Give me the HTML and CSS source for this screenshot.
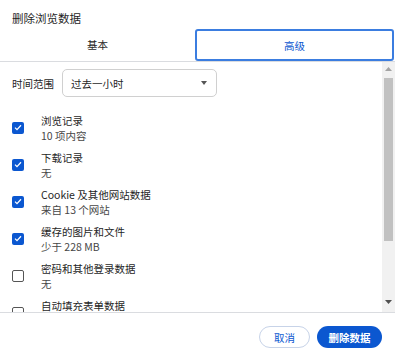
FILE: index.html
```
<!DOCTYPE html>
<html lang="zh-CN">
<head>
  <meta charset="UTF-8">
  <title>删除浏览数据</title>
  <link rel="stylesheet" href="styles.css">
</head>
<body>
  <div class="dialog">
    <div class="title">删除浏览数据</div>
    <div class="tabs">
      <div class="tab">基本</div>
      <div class="tab active">高级</div>
    </div>
    <div class="content">
      <div class="list">
        <div class="range-row">
          <span class="range-label">时间范围</span>
          <div class="select">
            <span>过去一小时</span>
            <svg class="caret" width="6" height="4" viewBox="0 0 6 4"><path d="M0 0h6L3 4z" fill="#555"/></svg>
          </div>
        </div>
        <div class="item">
          <span class="box checked"><svg width="8" height="7" viewBox="0 0 8 7"><path d="M1 3.6l2 2L7 1.3" fill="none" stroke="#fff" stroke-width="1.3"/></svg></span>
          <div class="text"><div class="name">浏览记录</div><div class="sub">10 项内容</div></div>
        </div>
        <div class="item">
          <span class="box checked"><svg width="8" height="7" viewBox="0 0 8 7"><path d="M1 3.6l2 2L7 1.3" fill="none" stroke="#fff" stroke-width="1.3"/></svg></span>
          <div class="text"><div class="name">下载记录</div><div class="sub">无</div></div>
        </div>
        <div class="item">
          <span class="box checked"><svg width="8" height="7" viewBox="0 0 8 7"><path d="M1 3.6l2 2L7 1.3" fill="none" stroke="#fff" stroke-width="1.3"/></svg></span>
          <div class="text"><div class="name">Cookie 及其他网站数据</div><div class="sub">来自 13 个网站</div></div>
        </div>
        <div class="item">
          <span class="box checked"><svg width="8" height="7" viewBox="0 0 8 7"><path d="M1 3.6l2 2L7 1.3" fill="none" stroke="#fff" stroke-width="1.3"/></svg></span>
          <div class="text"><div class="name">缓存的图片和文件</div><div class="sub">少于 228 MB</div></div>
        </div>
        <div class="item">
          <span class="box"></span>
          <div class="text"><div class="name">密码和其他登录数据</div><div class="sub">无</div></div>
        </div>
        <div class="item">
          <span class="box"></span>
          <div class="text"><div class="name">自动填充表单数据</div><div class="sub">无</div></div>
        </div>
      </div>
      <div class="scrollbar">
        <svg class="arrow" width="7" height="4" viewBox="0 0 7 4"><path d="M0 4h7L3.5 0z" fill="#a3a3a3"/></svg>
        <div class="thumb"></div>
        <svg class="arrow down" width="7" height="4" viewBox="0 0 7 4"><path d="M0 0h7L3.5 4z" fill="#505050"/></svg>
      </div>
    </div>
    <div class="footer">
      <button class="btn cancel">取消</button>
      <button class="btn primary">删除数据</button>
    </div>
  </div>
</body>
</html>
```

FILE: styles.css
```
body {
  margin: 0;
  background-color: #ffffff;
  color: #1f1f1f;
  font-family: "Noto Sans CJK SC", "Noto Sans", sans-serif;
  font-size: 10.5px;
}
.dialog {
  width: 395px;
  height: 362px;
  display: flex;
  flex-direction: column;
}
.title {
  height: 29px;
  padding-left: 12px;
  font-size: 11.5px;
  line-height: 36px;
}
.tabs {
  display: flex;
  height: 33px;
  border-bottom: 1px solid #dadce0;
  box-sizing: border-box;
}
.tab {
  flex: 1;
  display: flex;
  align-items: center;
  justify-content: center;
  margin-bottom: 1px;
}
.tab.active {
  color: #0b57d0;
  border: 2px solid #3b7de0;
  border-radius: 3px;
  margin: 0 1px 0 0;
  height: 32px;
  box-sizing: border-box;
}
.content {
  height: 250px;
  display: flex;
  overflow: hidden;
}
.list {
  flex: 1;
  padding: 7px 0 0 12px;
  overflow: hidden;
}
.range-row {
  display: flex;
  align-items: center;
  height: 28px;
  margin-bottom: 12px;
}
.range-label {
  width: 50px;
}
.select {
  width: 155px;
  height: 28px;
  box-sizing: border-box;
  border: 1px solid #d0d0d0;
  border-radius: 5px;
  display: flex;
  align-items: center;
  justify-content: space-between;
  padding: 0 9px 0 8px;
}
.item {
  display: flex;
  align-items: center;
  height: 37px;
}
.box {
  width: 12px;
  height: 12px;
  box-sizing: border-box;
  border: 1.5px solid #555;
  border-radius: 2px;
  margin-right: 17px;
  display: flex;
  align-items: center;
  justify-content: center;
}
.box.checked {
  border: none;
  background-color: #0b57d0;
}
.text {
  line-height: 15px;
}
.sub {
  color: #474747;
}
.scrollbar {
  width: 13px;
  background-color: #f1f1f1;
  display: flex;
  flex-direction: column;
  align-items: center;
}
.arrow {
  margin: 5px 0 4px;
}
.thumb {
  width: 9px;
  height: 163px;
  background-color: #c1c1c1;
  margin-top: 3px;
}
.arrow.down {
  margin-top: auto;
  margin-bottom: 8px;
}
.footer {
  border-top: 1px solid #dadce0;
  display: flex;
  justify-content: flex-end;
  align-items: flex-start;
  padding: 13px 13px 0 0;
  gap: 7px;
  flex: 1;
}
.btn {
  height: 22px;
  border-radius: 11px;
  font-family: inherit;
  font-size: 10.5px;
  padding: 0;
  cursor: pointer;
}
.cancel {
  width: 51px;
  background-color: #ffffff;
  color: #0b57d0;
  border: 1px solid #c7d3e8;
}
.primary {
  width: 65px;
  background-color: #0b57d0;
  color: #ffffff;
  border: none;
  font-weight: bold;
}
```
